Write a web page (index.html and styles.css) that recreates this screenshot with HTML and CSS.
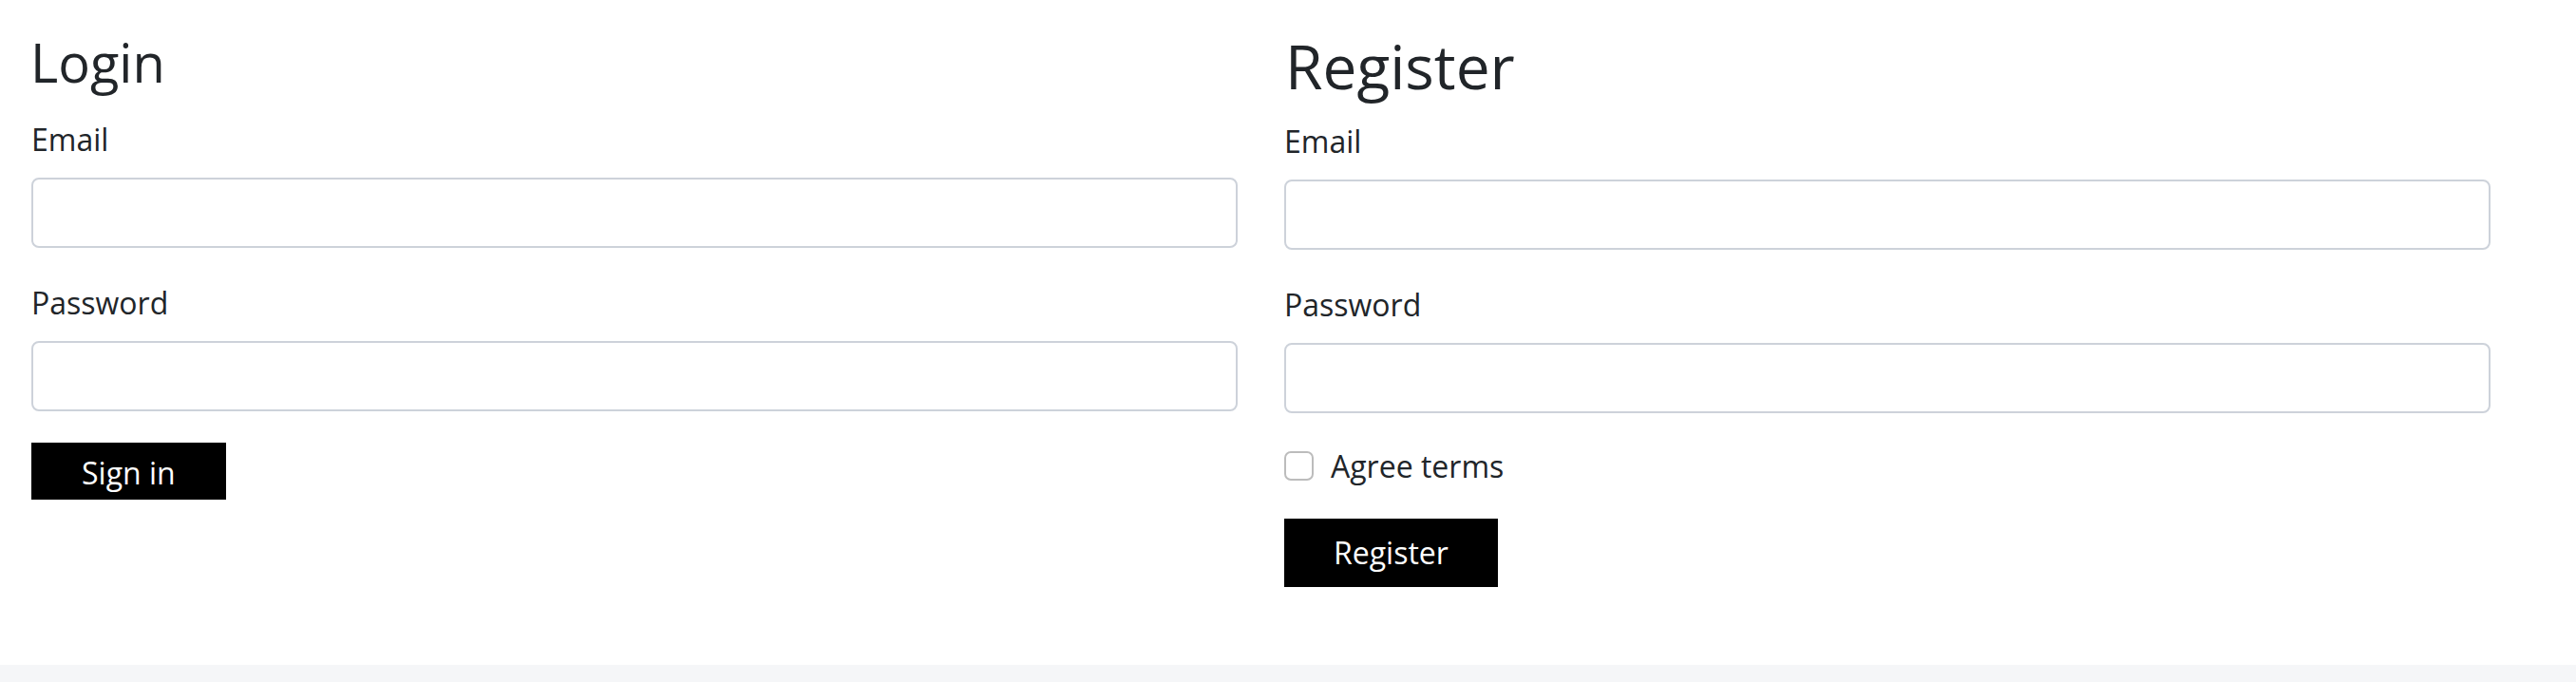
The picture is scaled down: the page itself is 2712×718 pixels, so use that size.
FILE: index.html
```html
<!DOCTYPE html>
<html lang="en">
<head>
<meta charset="utf-8">
<title>Login / Register</title>
<link rel="stylesheet" href="styles.css">
</head>
<body>
<main class="page">
  <section class="col">
    <h2 class="title title-login">Login</h2>
    <form class="form">
      <div class="field">
        <label class="label" for="login-email">Email</label>
        <input class="input" id="login-email" type="email">
      </div>
      <div class="field">
        <label class="label" for="login-password">Password</label>
        <input class="input" id="login-password" type="password">
      </div>
      <button class="btn btn-signin" type="button">Sign in</button>
    </form>
  </section>
  <section class="col">
    <h2 class="title title-register">Register</h2>
    <form class="form">
      <div class="field">
        <label class="label" for="reg-email">Email</label>
        <input class="input" id="reg-email" type="email">
      </div>
      <div class="field">
        <label class="label" for="reg-password">Password</label>
        <input class="input" id="reg-password" type="password">
      </div>
      <div class="check-row">
        <input class="check" id="agree" type="checkbox">
        <label class="check-label" for="agree">Agree terms</label>
      </div>
      <button class="btn btn-register" type="button">Register</button>
    </form>
  </section>
</main>
<footer class="footer"></footer>
</body>
</html>
```
FILE: styles.css
```css
html, body {
  margin: 0;
  padding: 0;
  background: #ffffff;
}

body {
  font-family: "Open Sans", "Liberation Sans", sans-serif;
  color: #212529;
  font-size: 32px;
  line-height: 48px;
}

.page {
  height: 700px;
  box-sizing: border-box;
  padding: 0 90px 0 33px;
  display: grid;
  grid-template-columns: 1fr 1fr;
  column-gap: 49px;
  align-items: start;
}

.col {
  display: flex;
  flex-direction: column;
}

.title {
  font-weight: 400;
  line-height: 1.2;
  margin: 32px 0 0 0;
  color: #212529;
}

.title-login {
  font-size: 56px;
  margin-bottom: 24px;
  margin-left: -1px;
}

.title-register {
  font-size: 64px;
  margin-bottom: 16px;
  margin-left: 1px;
}

.form {
  display: flex;
  flex-direction: column;
  align-items: flex-start;
  margin: 0;
}

.field {
  display: flex;
  flex-direction: column;
  width: 100%;
  margin-bottom: 34px;
}

.label {
  display: block;
  font-size: 32px;
  line-height: 48px;
  margin-bottom: 16px;
}

.input {
  display: block;
  width: 100%;
  height: 74px;
  box-sizing: border-box;
  border: 2px solid #cdd2da;
  border-radius: 8px;
  background: #ffffff;
  padding: 12px 24px;
  font: inherit;
  margin: 0;
  outline: none;
}

.check-row {
  display: flex;
  align-items: center;
  gap: 18px;
  height: 48px;
  margin-top: -2px;
  margin-bottom: 31px;
}

.check {
  appearance: none;
  -webkit-appearance: none;
  width: 31px;
  height: 31px;
  margin: 0;
  box-sizing: border-box;
  border: 2px solid #bcbcbc;
  border-radius: 7px;
  background: #ffffff;
}

.check-label {
  font-size: 32px;
  line-height: 48px;
}

.btn {
  font-family: "Open Sans", "Liberation Sans", sans-serif;
  font-size: 32px;
  line-height: 48px;
  background: #000000;
  color: #ffffff;
  border: 0;
  border-radius: 0;
  margin: 0;
  cursor: pointer;
}

.btn-signin {
  padding: 8px 53px 4px;
  margin-top: -1px;
}

.btn-register {
  padding: 12px 52px;
}

.footer {
  height: 18px;
  background: #f5f6f8;
}
```
